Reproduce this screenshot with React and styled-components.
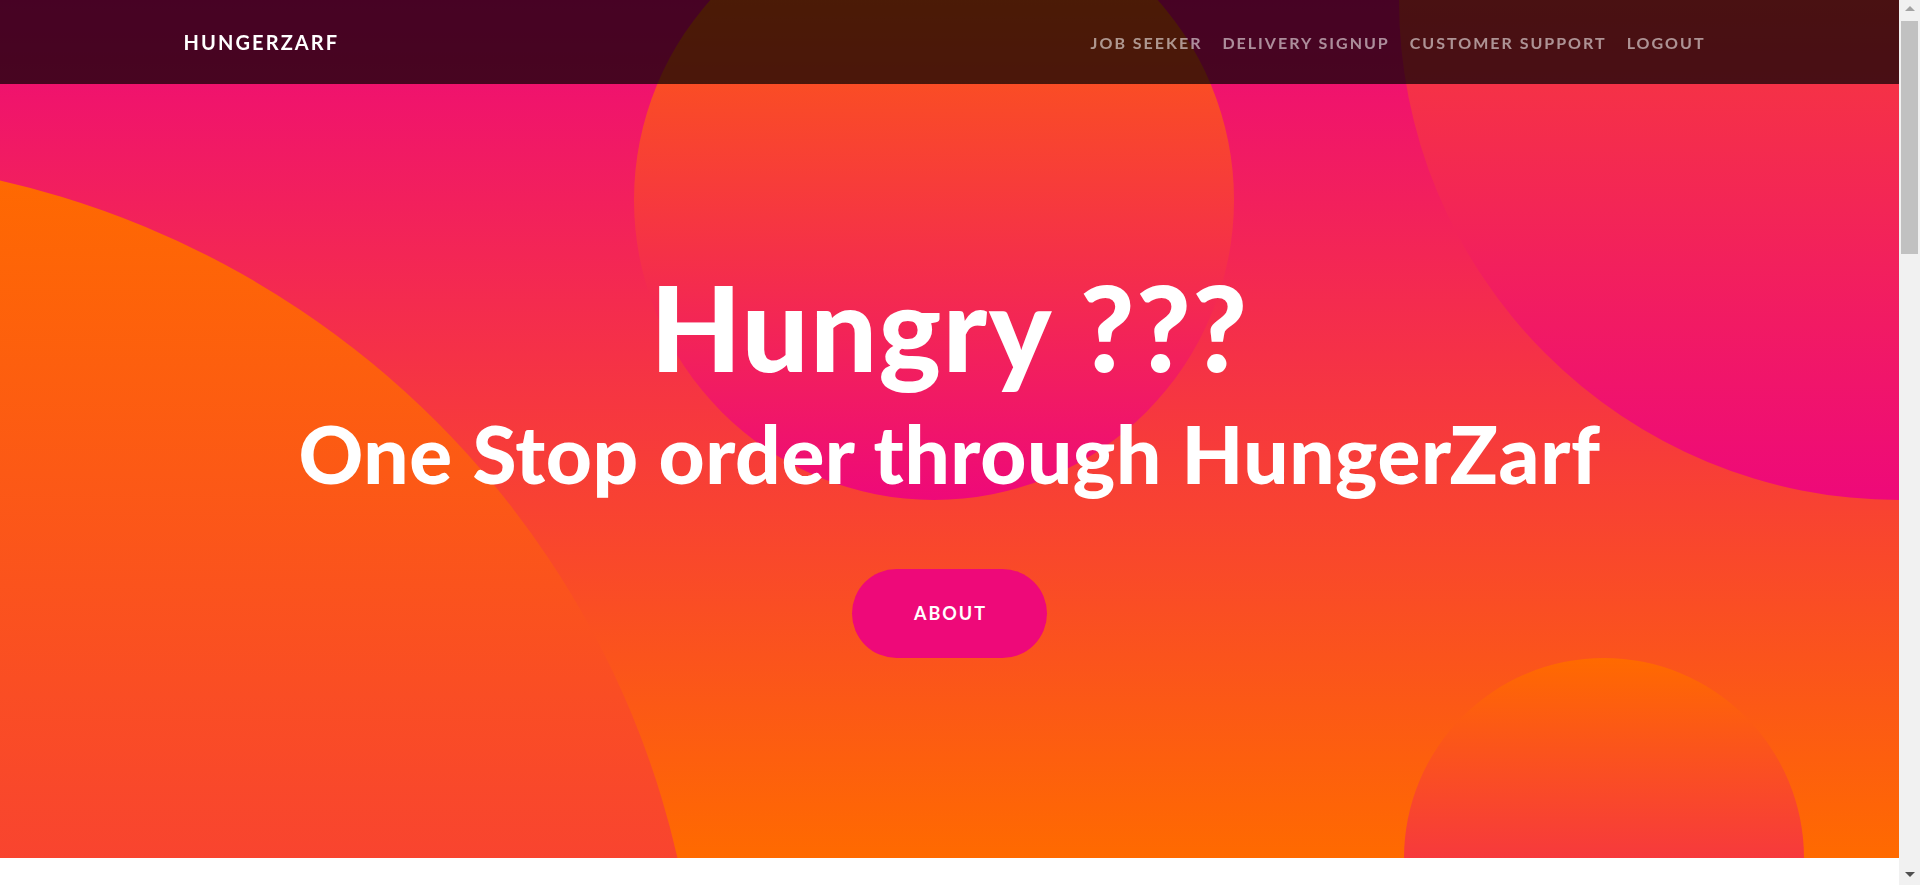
import React from "react";
import styled, { createGlobalStyle } from "styled-components";

const SCROLLBAR = 21;

const GlobalStyle = createGlobalStyle`
  html, body { margin: 0; padding: 0; }
  html { scrollbar-width: none; }
  body::-webkit-scrollbar { display: none; }
  body {
    font-family: Lato, "Open Sans", "Liberation Sans", sans-serif;
    background: #fff;
    color: #212529;
  }
  * { box-sizing: border-box; }
`;

const Page = styled.div`
  width: calc(100% - ${SCROLLBAR}px);
`;

const NavBar = styled.nav`
  position: fixed;
  top: 0;
  left: 0;
  right: ${SCROLLBAR}px;
  z-index: 10;
  height: 84px;
  background: rgba(0, 0, 0, 0.7);
`;

const NavInner = styled.div`
  max-width: 1532px;
  height: 100%;
  margin: 0 auto;
  display: flex;
  align-items: center;
  justify-content: space-between;
`;

const Brand = styled.a`
  font-family: Lato, sans-serif;
  font-weight: 700;
  font-size: 20px;
  letter-spacing: 2.1px;
  text-transform: uppercase;
  color: #fff;
  text-decoration: none;
`;

const NavList = styled.ul`
  display: flex;
  list-style: none;
  margin: 0;
  padding: 0;
`;

const NavLink = styled.a`
  display: block;
  padding: 8px 10px;
  font-family: Lato, sans-serif;
  font-weight: 700;
  font-size: 16px;
  letter-spacing: 2px;
  text-transform: uppercase;
  color: rgba(255, 255, 255, 0.55);
  text-decoration: none;
`;

const Masthead = styled.header`
  position: relative;
  overflow: hidden;
  padding-top: 256px;
  padding-bottom: 200px;
  background: linear-gradient(0deg, #ff6a00 0%, #ee0979 100%);
  text-align: center;
`;

const Circle = styled.div`
  position: absolute;
  z-index: 0;
  border-radius: 100%;
  background: linear-gradient(0deg, #ee0979 0%, #ff6a00 100%);
  width: ${(p) => p.$size}px;
  height: ${(p) => p.$size}px;
  ${(p) => p.$pos}
`;

const Content = styled.div`
  position: relative;
  z-index: 1;
  display: flex;
  flex-direction: column;
  align-items: center;
`;

const Heading = styled.h1`
  margin: 0;
  font-family: Lato, "Open Sans", sans-serif;
  font-weight: 900;
  font-size: 118px;
  letter-spacing: 1.5px;
  line-height: 1.2;
  color: #fff;
`;

const SubHeading = styled.h2`
  margin: 7px 0 0;
  font-family: Lato, "Open Sans", sans-serif;
  font-weight: 900;
  font-size: 80px;
  letter-spacing: 0.6px;
  line-height: 1.2;
  color: #fff;
`;

const PillButton = styled.a`
  margin-top: 68px;
  display: inline-block;
  width: 195px;
  height: 89px;
  line-height: 89px;
  border-radius: 50px;
  background: #ee0979;
  color: #fff;
  font-family: Lato, sans-serif;
  font-weight: 700;
  font-size: 18px;
  letter-spacing: 2px;
  text-transform: uppercase;
  text-decoration: none;
  text-align: center;
  padding-left: 2px;
`;

const Below = styled.section`
  height: 2340px;
  background: #fff;
`;

const ScrollTrack = styled.div`
  position: fixed;
  top: 0;
  right: 0;
  bottom: 0;
  width: ${SCROLLBAR}px;
  background: #f1f1f1;
  z-index: 20;
`;

const ScrollThumb = styled.div`
  position: absolute;
  top: 21px;
  left: 2px;
  right: 2px;
  height: 233px;
  background: #c1c1c1;
`;

const Arrow = styled.div`
  position: absolute;
  left: 50%;
  transform: translateX(-50%);
  width: 0;
  height: 0;
  border-left: 5px solid transparent;
  border-right: 5px solid transparent;
  ${(p) =>
    p.$up
      ? `top: 6px; border-bottom: 5px solid #a3a3a3;`
      : `bottom: 8px; border-top: 5px solid #505050;`}
`;

const links = ["Job Seeker", "Delivery Signup", "Customer Support", "Logout"];

export default function App() {
  return (
    <>
      <GlobalStyle />
      <Page>
        <NavBar>
          <NavInner>
            <Brand href="#">HungerZarf</Brand>
            <NavList>
              {links.map((l) => (
                <li key={l}>
                  <NavLink href="#">{l}</NavLink>
                </li>
              ))}
            </NavList>
          </NavInner>
        </NavBar>
        <Masthead>
          <Content>
            <Heading>Hungry ???</Heading>
            <SubHeading>One Stop order through HungerZarf</SubHeading>
            <PillButton href="#">About</PillButton>
          </Content>
          <Circle $size={1800} $pos="bottom:-1100px;left:-1100px;" />
          <Circle $size={1000} $pos="top:-500px;right:-500px;" />
          <Circle $size={400} $pos="bottom:-200px;right:5%;" />
          <Circle $size={600} $pos="top:-100px;right:35%;" />
        </Masthead>
        <Below />
      </Page>
      <ScrollTrack>
        <Arrow $up />
        <ScrollThumb />
        <Arrow />
      </ScrollTrack>
    </>
  );
}
